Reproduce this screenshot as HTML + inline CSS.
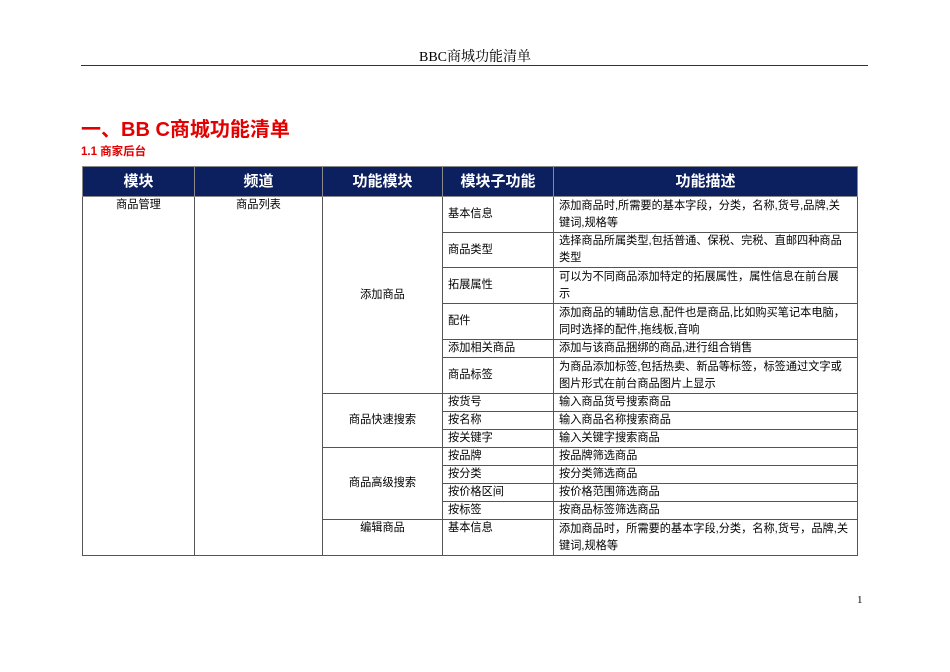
<!DOCTYPE html>
<html><head><meta charset="utf-8"><style>
body{margin:0;width:950px;height:672px;background:#fff;position:relative;font-family:"Liberation Sans","Noto Sans CJK SC",sans-serif;overflow:hidden}
.hdr{position:absolute;left:0;width:950px;top:46px;text-align:center;font-family:"Liberation Serif","Noto Serif CJK SC",serif;font-size:14px;color:#000}
.hl{position:absolute;left:81px;width:787px;top:65px;border-top:1px solid #333}
h1{position:absolute;left:81px;top:113px;margin:0;font-size:20px;color:#e30000;font-weight:bold}
h2{position:absolute;left:81px;top:143px;margin:0;font-size:11.5px;color:#e30000;font-weight:bold}
table{position:absolute;left:82px;top:166px;border-collapse:collapse;table-layout:fixed;font-size:11.2px;color:#000}
td,th{border:1px solid #555;padding:0 5px;line-height:17px;vertical-align:middle;white-space:nowrap;overflow:hidden}
th{background:#0c1f5e;color:#fff;font-size:15px;height:29px;border-color:#888}
.c{text-align:center}
.t{vertical-align:top;text-align:center}
.pg{position:absolute;left:857px;top:594px;font-family:"Liberation Serif",serif;font-size:11px}
</style></head><body>
<div class="hdr">BBC商城功能清单</div>
<div class="hl"></div>
<h1>一、BB C商城功能清单</h1>
<h2>1.1 商家后台</h2>
<table>
<colgroup><col style="width:112px"><col style="width:128px"><col style="width:120px"><col style="width:111px"><col style="width:304px"></colgroup>
<tr><th>模块</th><th>频道</th><th>功能模块</th><th>模块子功能</th><th>功能描述</th></tr>
<tr style="height:36px"><td class="t" rowspan="14">商品管理</td><td class="t" rowspan="14">商品列表</td><td class="c" rowspan="6">添加商品</td><td>基本信息</td><td>添加商品时,所需要的基本字段，分类，名称,货号,品牌,关<br>键词,规格等</td></tr>
<tr style="height:35px"><td>商品类型</td><td>选择商品所属类型,包括普通、保税、完税、直邮四种商品<br>类型</td></tr>
<tr style="height:36px"><td>拓展属性</td><td>可以为不同商品添加特定的拓展属性，属性信息在前台展<br>示</td></tr>
<tr style="height:36px"><td>配件</td><td>添加商品的辅助信息,配件也是商品,比如购买笔记本电脑，<br>同时选择的配件,拖线板,音响</td></tr>
<tr style="height:18px"><td>添加相关商品</td><td>添加与该商品捆绑的商品,进行组合销售</td></tr>
<tr style="height:36px"><td>商品标签</td><td>为商品添加标签,包括热卖、新品等标签，标签通过文字或<br>图片形式在前台商品图片上显示</td></tr>
<tr style="height:18px"><td class="c" rowspan="3">商品快速搜索</td><td>按货号</td><td>输入商品货号搜索商品</td></tr>
<tr style="height:18px"><td>按名称</td><td>输入商品名称搜索商品</td></tr>
<tr style="height:18px"><td>按关键字</td><td>输入关键字搜索商品</td></tr>
<tr style="height:18px"><td class="c" rowspan="4">商品高级搜索</td><td>按品牌</td><td>按品牌筛选商品</td></tr>
<tr style="height:18px"><td>按分类</td><td>按分类筛选商品</td></tr>
<tr style="height:18px"><td>按价格区间</td><td>按价格范围筛选商品</td></tr>
<tr style="height:18px"><td>按标签</td><td>按商品标签筛选商品</td></tr>
<tr style="height:36px"><td class="t">编辑商品</td><td style="vertical-align:top">基本信息</td><td>添加商品时，所需要的基本字段,分类，名称,货号，品牌,关<br>键词,规格等</td></tr>
</table>
<div class="pg">1</div>
</body></html>
